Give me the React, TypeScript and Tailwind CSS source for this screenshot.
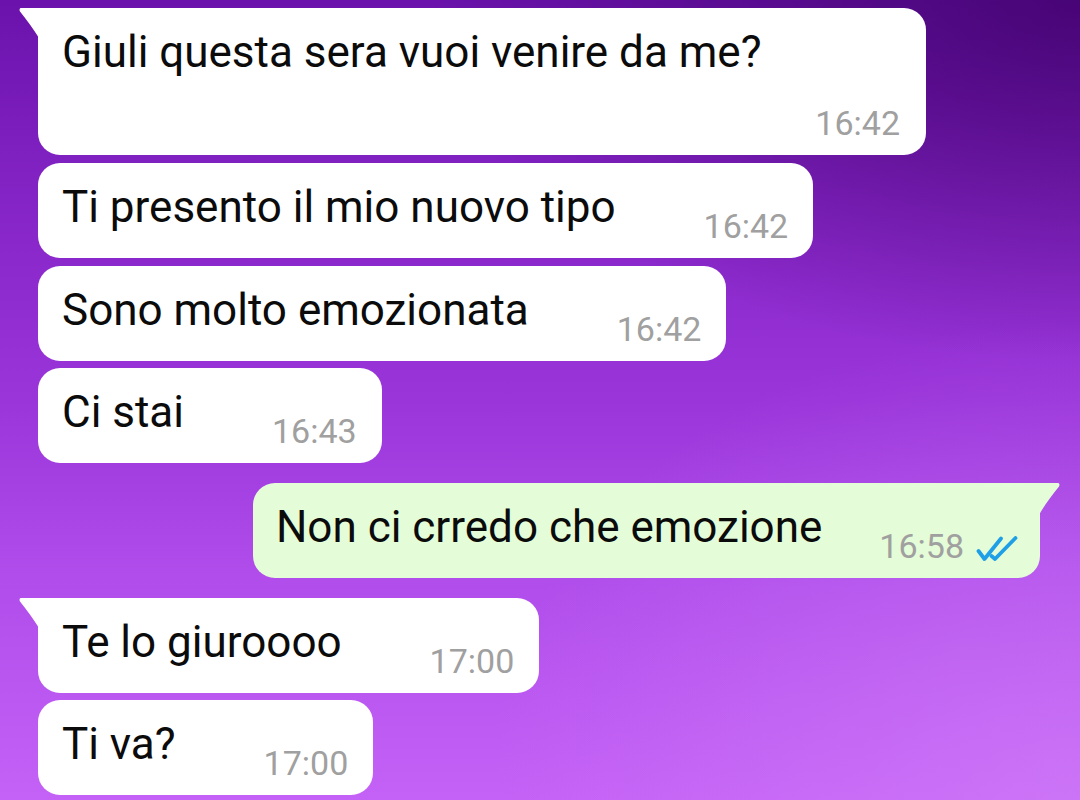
import React from "react";

type Msg = {
  id: number;
  text: string;
  time: string;
  out?: boolean;
  tail?: boolean;
  gap: string;
};

const MESSAGES: Msg[] = [
  { id: 2, text: "Ti presento il mio nuovo tipo", time: "16:42", gap: "mt-[8px]" },
  { id: 3, text: "Sono molto emozionata", time: "16:42", gap: "mt-[8px]" },
  { id: 4, text: "Ci stai", time: "16:43", gap: "mt-[7px]" },
  { id: 5, text: "Non ci crredo che emozione", time: "16:58", out: true, tail: true, gap: "mt-[20px]" },
  { id: 6, text: "Te lo giuroooo", time: "17:00", tail: true, gap: "mt-[20px]" },
  { id: 7, text: "Ti va?", time: "17:00", gap: "mt-[7px]" },
];

function InTail() {
  return (
    <svg className="absolute -left-[19px] top-0" width="20" height="30" viewBox="0 0 20 30">
      <path d="M2 0 H20 V30 C15 22 8 12 1 3.4 C0 2 0.6 0 2 0 Z" fill="#ffffff" />
    </svg>
  );
}

function OutTail() {
  return (
    <svg className="absolute -right-[20px] top-0" width="21" height="32" viewBox="0 0 21 32">
      <path d="M19 0 H0 V32 C5 23 12 13 20 3.4 C21 2 20.4 0 19 0 Z" fill="#e4fcd7" />
    </svg>
  );
}

function DoubleCheck() {
  return (
    <svg width="42" height="26" viewBox="0 0 42 26" className="ml-[12px] mb-[1px]">
      <g fill="none" stroke="#1fa0e6" strokeWidth="3.8" strokeLinecap="round" strokeLinejoin="round">
        <path d="M2.5 15 L8.5 23 L25 2.5" />
        <path d="M15.5 20 L19 23 L39.5 2" />
      </g>
    </svg>
  );
}

function Bubble({ msg }: { msg: Msg }) {
  return (
    <div
      className={`relative flex items-end ${
        msg.out
          ? "self-end mr-[40px] bg-[#e4fcd7] pr-[22px] pl-[23px]"
          : "self-start bg-white pl-[24px] pr-[25px]"
      } ${msg.gap} rounded-[22px] ${msg.tail ? (msg.out ? "rounded-tr-none" : "rounded-tl-none") : ""}`}
    >
      {msg.tail && (msg.out ? <OutTail /> : <InTail />)}
      <div className="text-[44px] leading-[50px] pt-[19px] pb-[26px] text-[#0b0b0b] whitespace-nowrap">
        {msg.text}
      </div>
      <div className={`flex items-end mb-[15px] ${msg.out ? "ml-[57px]" : "ml-[88px]"}`}>
        <span className="text-[34px] leading-[33px] text-[#a0a0a0] whitespace-nowrap">{msg.time}</span>
        {msg.out && <DoubleCheck />}
      </div>
    </div>
  );
}

export default function App() {
  return (
    <div
      className="w-[1080px] h-[800px] overflow-hidden bg-[radial-gradient(ellipse_60%_45%_at_100%_0%,rgba(60,0,100,0.75),rgba(60,0,100,0)),radial-gradient(ellipse_55%_60%_at_100%_100%,rgba(214,140,250,0.45),rgba(214,140,250,0)),linear-gradient(180deg,#6a12ab_0%,#8524c6_25%,#9a35da_50%,#b04deb_72%,#c461f6_100%)]"
      style={{ fontFamily: "Roboto, 'Liberation Sans', Arial, sans-serif" }}
    >
      <div className="flex flex-col pt-[8px] pl-[38px]">
        {/* first message: time wraps onto its own line */}
        <div className="relative self-start w-[888px] bg-white rounded-[22px] rounded-tl-none flex flex-col pl-[24px] pr-[26px] pb-[15px]">
          <InTail />
          <div className="text-[44px] leading-[50px] pt-[19px] text-[#0b0b0b] whitespace-nowrap">
            Giuli questa sera vuoi venire da me?
          </div>
          <span className="self-end mt-[30px] text-[34px] leading-[33px] text-[#a0a0a0]">16:42</span>
        </div>
        {MESSAGES.map((m) => (
          <Bubble key={m.id} msg={m} />
        ))}
      </div>
    </div>
  );
}
